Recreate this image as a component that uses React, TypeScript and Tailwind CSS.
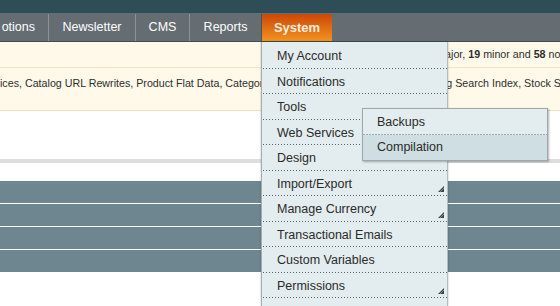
import React from 'react';

const font = { fontFamily: '"Liberation Sans", Arial, sans-serif' };

const menu = [
  { label: 'My Account' },
  { label: 'Notifications' },
  { label: 'Tools' },
  { label: 'Web Services' },
  { label: 'Design' },
  { label: 'Import/Export', more: true },
  { label: 'Manage Currency', more: true },
  { label: 'Transactional Emails' },
  { label: 'Custom Variables' },
  { label: 'Permissions', more: true },
  { label: 'Cache Management' },
];

const dotted =
  'bg-[linear-gradient(to_right,#59666b_1px,transparent_1px)] bg-[length:3px_1px] bg-repeat-x bg-bottom';

const MoreArrow = () => (
  <svg width="8" height="7" viewBox="0 0 8 7" className="absolute right-[2px] bottom-[3px]">
    <polygon points="7,0 7,6 1,6" fill="#3b494e" />
    <line x1="3" y1="6" x2="7" y2="2" stroke="#8a9a9f" strokeWidth="0.8" />
  </svg>
);

export default function App() {
  return (
    <div className="relative w-[560px] h-[306px] overflow-hidden bg-white" style={font}>
      {/* header strip */}
      <div className="h-[13px] bg-[#2e4d57]" />
      <div className="h-[1px] bg-[#587479]" />

      {/* main nav */}
      <div className="h-[28px] bg-[#656d73] border-b border-[#414d52] flex text-[12.5px] text-white">
        <div className="w-[48px] h-full flex items-center justify-end pr-[13px] overflow-hidden whitespace-nowrap">
          otions
        </div>
        <div className="w-[87px] h-full flex items-center justify-center border-l border-[#8c9398]">Newsletter</div>
        <div className="w-[54px] h-full flex items-center justify-center border-l border-[#8c9398]">CMS</div>
        <div className="w-[72px] h-full flex items-center justify-center border-l border-[#8c9398]">Reports</div>
        <div className="h-full w-[71px] flex items-center justify-center border-l border-[#4a5357] bg-[linear-gradient(to_bottom,#cc4708,#f2921f)]">
          <span className="text-[13px] font-bold text-[#f5ebdf]">System</span>
        </div>
      </div>

      {/* notifications */}
      <div className="bg-[#fff9e9] border-b border-[#efe1bd] text-[10.7px] text-[#2e2e2e]">
        <div className="h-[26px] flex items-center pl-[335px] whitespace-nowrap border-b border-[#f0e4c4]">
          <span>
            You have 1 critical, 4 major, <b>19</b> minor and <b>58</b> notice unread message(s).
          </span>
        </div>
        <div className="h-[42px] pt-[7px] whitespace-nowrap overflow-hidden">
          ices, Catalog URL Rewrites, Product Flat Data, Category Flat Data, Category Products, Catalog Search
          Index, Stock Status, Tag Aggregation Data.
        </div>
      </div>

      <div className="h-[48px]" />
      <div className="h-[4px] bg-[#dedede]" />
      <div className="h-[18px]" />

      <div className="flex flex-col gap-[1px]">
        <div className="h-[22px] bg-[#6e8690]" />
        <div className="h-[22px] bg-[#6e8690]" />
        <div className="h-[22px] bg-[#6e8690]" />
        <div className="h-[22px] bg-[#6e8690]" />
      </div>

      {/* System dropdown */}
      <ul className="absolute left-[261px] top-[42px] w-[187px] bottom-0 bg-[#e3ecee] border-l border-[#a4aeb1] border-r border-r-[#b3bcbf] shadow-[0_0_2px_rgba(0,0,0,0.25)] pt-[1px]">
        {menu.map((m) => (
          <li
            key={m.label}
            className={
              'relative h-[25.5px] flex items-center pl-[15px] pt-[2px] text-[12.5px] text-[#2b2b2b] ' + dotted
            }
          >
            {m.label}
            {m.more && <MoreArrow />}
          </li>
        ))}
      </ul>

      {/* Tools submenu */}
      <ul className="absolute left-[362px] top-[108px] w-[186px] bg-[#e3ecee] border border-[#9ea8ab] shadow-[1px_1px_2px_rgba(0,0,0,0.3)]">
        <li className={'h-[26px] flex items-center pl-[14px] text-[12.5px] text-[#2b2b2b] ' + dotted}>Backups</li>
        <li className="h-[25px] flex items-center pl-[14px] text-[12.5px] text-[#2b2b2b] bg-[#cfdee2]">
          Compilation
        </li>
      </ul>
    </div>
  );
}
